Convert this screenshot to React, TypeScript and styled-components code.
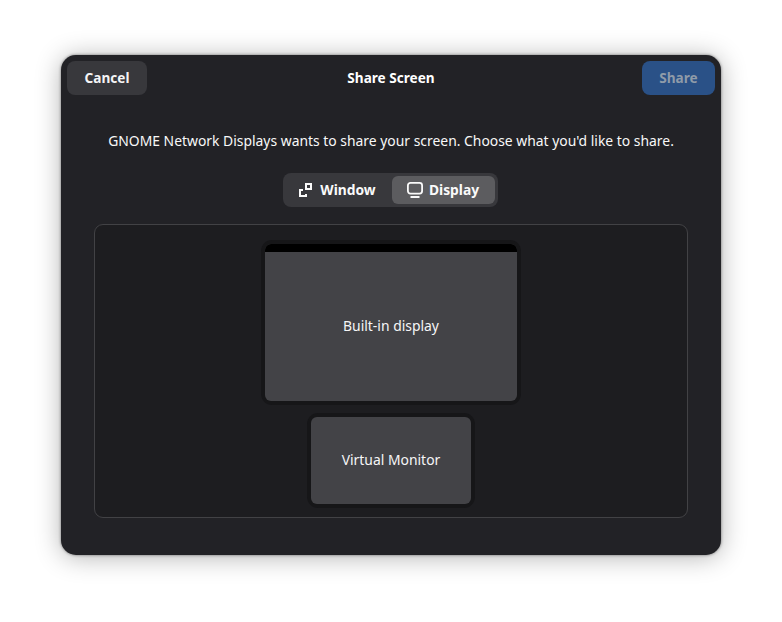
import styled, { createGlobalStyle } from 'styled-components';

const GlobalStyle = createGlobalStyle`
  html, body {
    margin: 0;
    background: #ffffff;
  }
  body {
    font-family: "Noto Sans", "Open Sans", sans-serif;
    font-size: 13.9px;
  }
  * {
    box-sizing: border-box;
  }
`;

const Page = styled.main`
  width: 782px;
  height: 622px;
  padding: 55px 61px;
`;

const Dialog = styled.section`
  width: 660px;
  height: 500px;
  display: flex;
  flex-direction: column;
  align-items: center;
  background: #222226;
  color: #ffffff;
  border-radius: 15px;
  box-shadow: 0 2px 26px rgba(0, 0, 0, 0.3), 0 0 3px rgba(0, 0, 0, 0.5);
`;

const HeaderBar = styled.header`
  width: 100%;
  display: flex;
  align-items: center;
  justify-content: space-between;
  padding: 6px;
`;

const Title = styled.h1`
  margin: 0 7px 2px 0;
  font-size: 13.6px;
  font-weight: 700;
`;

const HeaderButton = styled.button<{ $suggested?: boolean }>`
  height: 34px;
  width: ${(p) => (p.$suggested ? '73px' : '80px')};
  padding: 0 0 2px;
  border: 0;
  border-radius: 8px;
  font: inherit;
  font-size: 13.6px;
  font-weight: 700;
  background: ${(p) => (p.$suggested ? '#2a5187' : '#38383c')};
  color: ${(p) => (p.$suggested ? '#8f9ba9' : '#f4f4f5')};
`;

const Prompt = styled.p`
  margin: 29px 0 0;
  line-height: 22px;
  color: #f8f8f8;
`;

const ToggleGroup = styled.div`
  margin: 21px 1px 0 0;
  width: 215px;
  height: 34px;
  padding: 3px;
  display: flex;
  justify-content: flex-end;
  background: #38383c;
  border-radius: 8px;
`;

const ToggleButton = styled.button<{ $active?: boolean }>`
  width: ${(p) => (p.$active ? '103px' : '106px')};
  height: 28px;
  padding: 0 ${(p) => (p.$active ? '2px' : '4px')} 2px 0;
  display: flex;
  align-items: center;
  justify-content: center;
  gap: ${(p) => (p.$active ? '5px' : '6px')};
  border: 0;
  border-radius: 6px;
  font: inherit;
  font-size: 13.8px;
  font-weight: 700;
  color: #fafafa;
  background: ${(p) => (p.$active ? '#5c5c5f' : 'transparent')};

  svg {
    margin-top: 2px;
  }
`;

const MonitorPanel = styled.div`
  margin-top: 17px;
  width: 594px;
  height: 294px;
  padding-top: 15px;
  display: flex;
  flex-direction: column;
  align-items: center;
  gap: 8px;
  background: #1d1d20;
  border: 1px solid #424245;
  border-radius: 9px;
`;

const MonitorFrame = styled.div<{ $width: number; $height: number }>`
  width: ${(p) => p.$width}px;
  height: ${(p) => p.$height}px;
  padding: 4px;
  background: #161618;
  border-radius: 11px;
`;

const MonitorScreen = styled.div`
  height: 100%;
  display: flex;
  flex-direction: column;
  overflow: hidden;
  background: #434347;
  border-radius: 6px;
`;

const TopBar = styled.div`
  height: 8px;
  flex: none;
  background: #000000;
`;

const MonitorLabel = styled.div`
  flex: 1;
  display: flex;
  align-items: center;
  justify-content: center;
  padding-bottom: 2px;
  color: #f6f6f7;
`;

function WindowIcon() {
  return (
    <svg width="16" height="16" viewBox="0 0 16 16" fill="none" stroke="currentColor" strokeWidth="2">
      <rect x="8" y="2" width="5" height="5" />
      <path d="M5 8H2V14H8V12" />
    </svg>
  );
}

function DisplayIcon() {
  return (
    <svg width="18" height="18" viewBox="0 0 18 18" fill="none" stroke="currentColor">
      <rect x="1.9" y="1.9" width="14.2" height="10.7" rx="2.5" strokeWidth="1.8" />
      <path d="M4.5 16h9" strokeWidth="2" />
    </svg>
  );
}

export default function App() {
  return (
    <Page>
      <GlobalStyle />
      <Dialog>
        <HeaderBar>
          <HeaderButton>Cancel</HeaderButton>
          <Title>Share Screen</Title>
          <HeaderButton $suggested>Share</HeaderButton>
        </HeaderBar>
        <Prompt>GNOME Network Displays wants to share your screen. Choose what you'd like to share.</Prompt>
        <ToggleGroup>
          <ToggleButton>
            <WindowIcon />
            Window
          </ToggleButton>
          <ToggleButton $active>
            <DisplayIcon />
            Display
          </ToggleButton>
        </ToggleGroup>
        <MonitorPanel>
          <MonitorFrame $width={260} $height={165}>
            <MonitorScreen>
              <TopBar />
              <MonitorLabel>Built-in display</MonitorLabel>
            </MonitorScreen>
          </MonitorFrame>
          <MonitorFrame $width={168} $height={95}>
            <MonitorScreen>
              <MonitorLabel>Virtual Monitor</MonitorLabel>
            </MonitorScreen>
          </MonitorFrame>
        </MonitorPanel>
      </Dialog>
    </Page>
  );
}
